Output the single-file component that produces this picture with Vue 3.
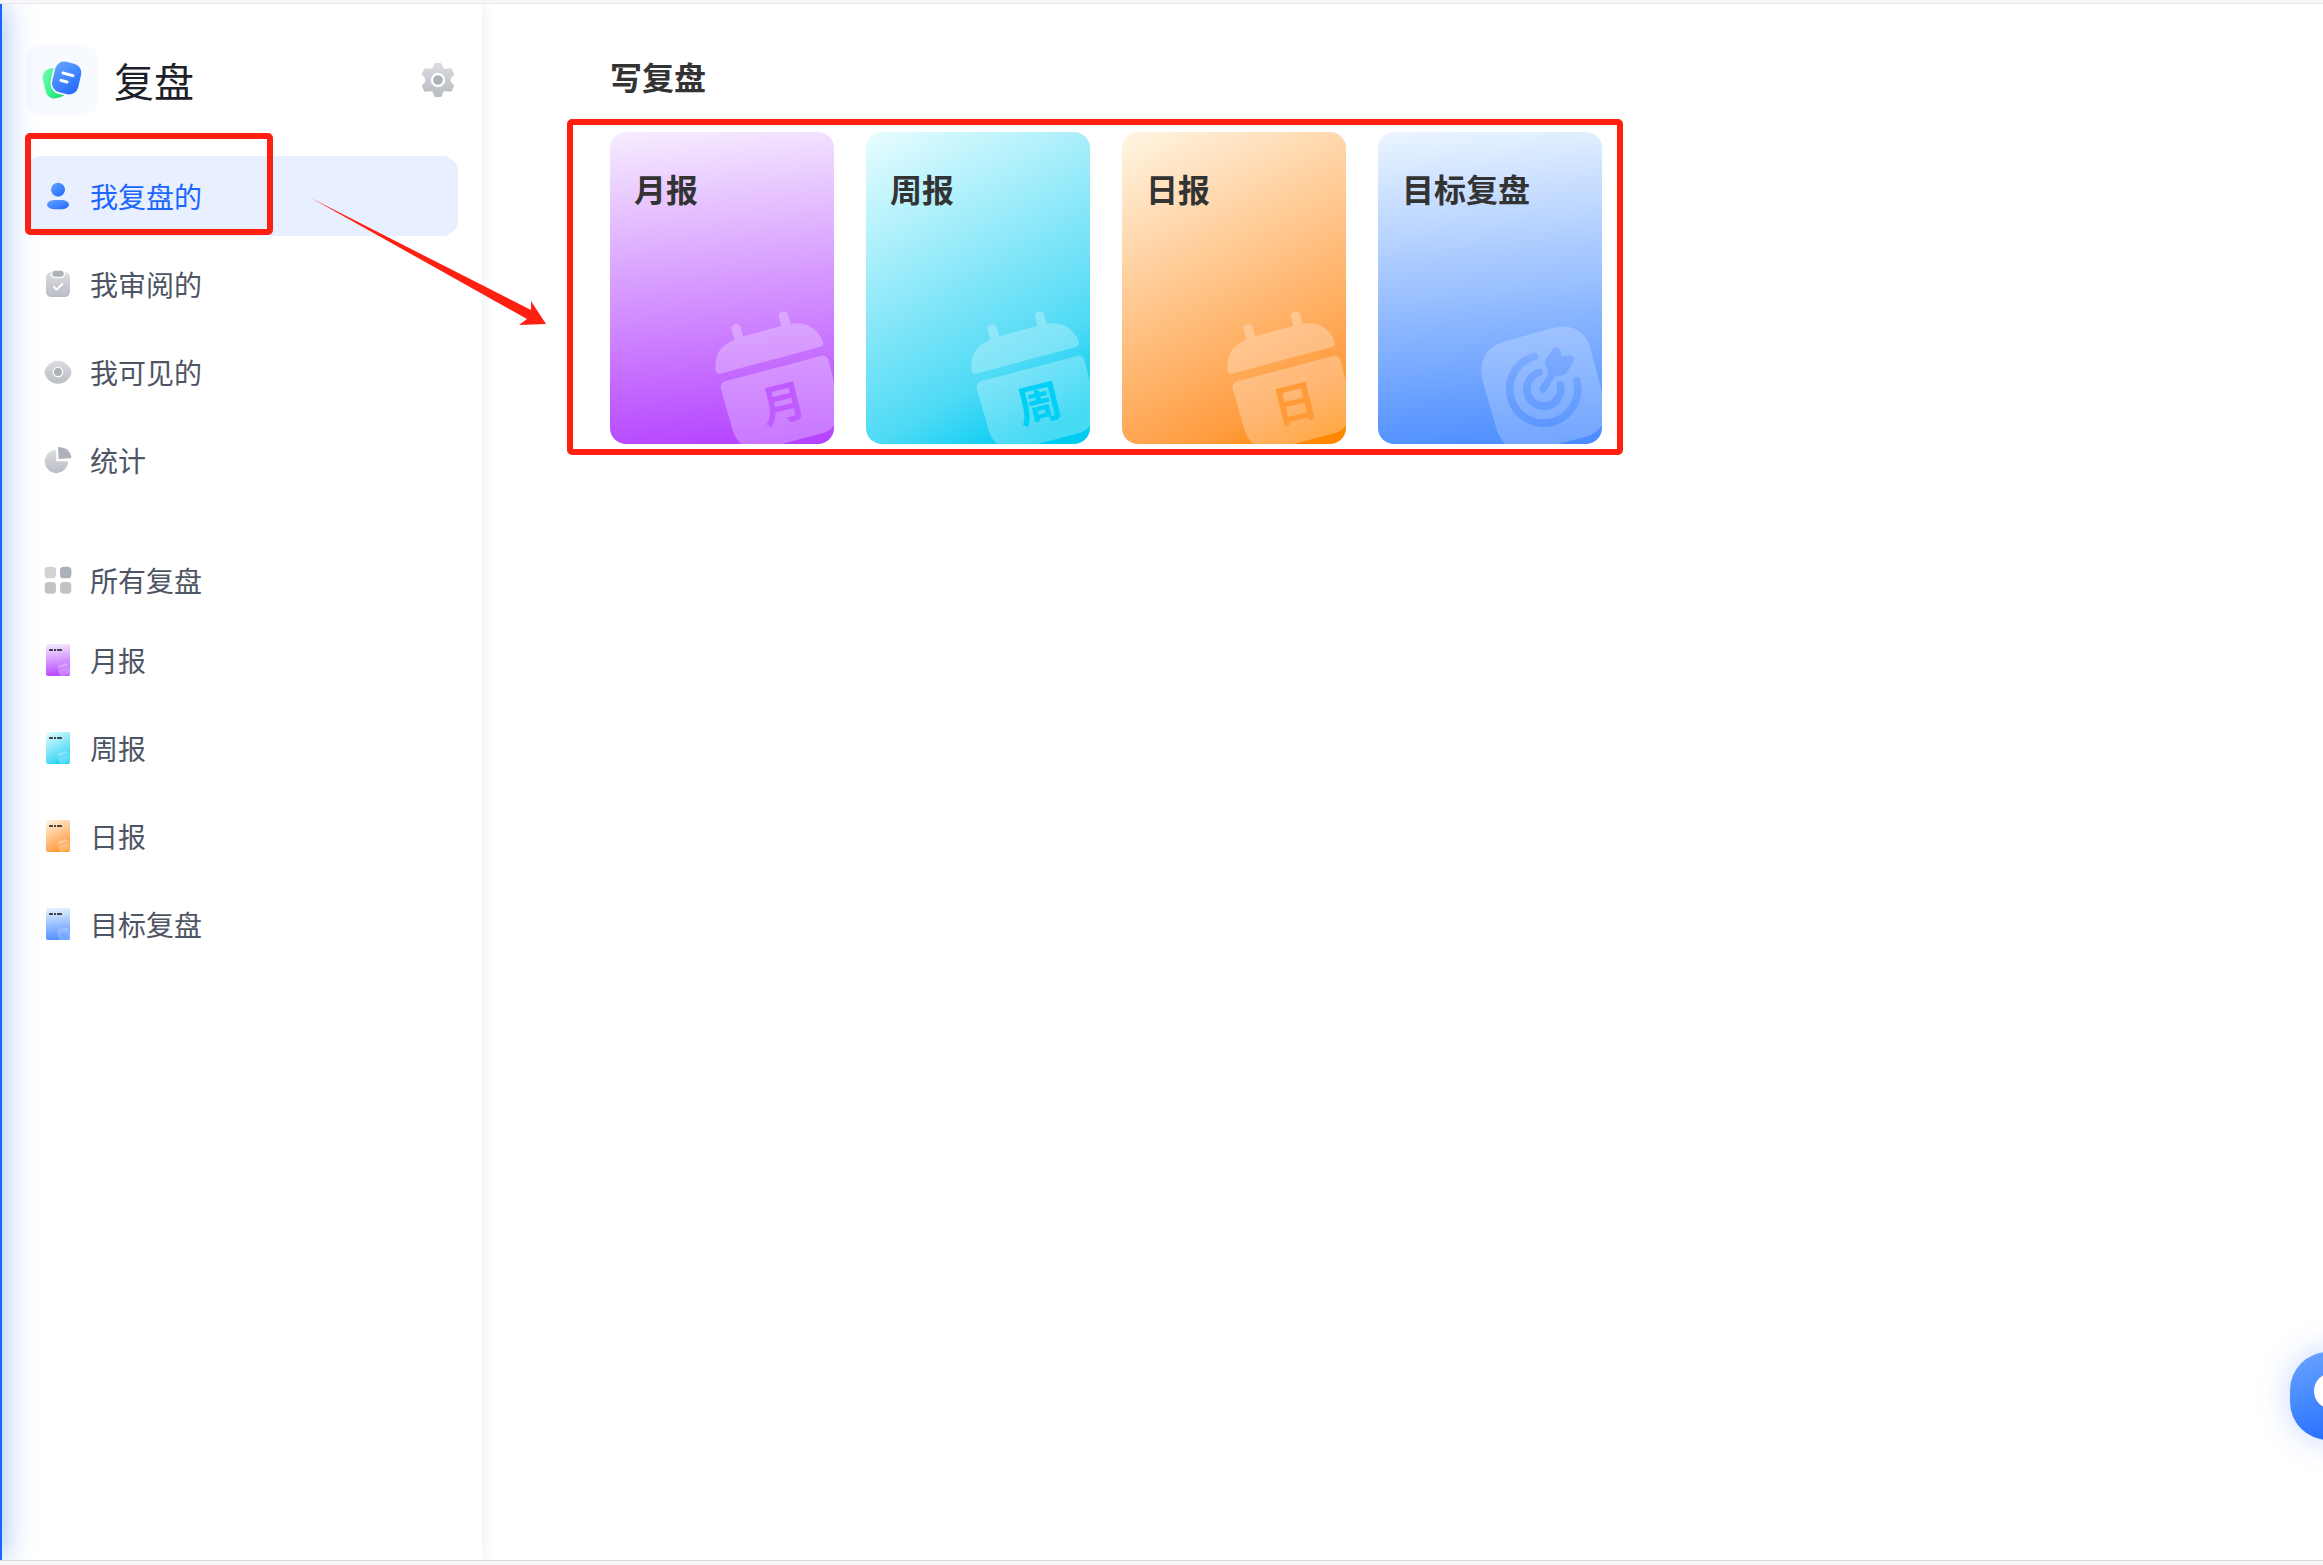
<script setup>
import { ref } from 'vue';

const menus = [
	{ key: 'mine', name: '我复盘的' },
	{ key: 'review', name: '我审阅的' },
	{ key: 'visible', name: '我可见的' },
	{ key: 'stat', name: '统计' }
];

const templates = [
	{ key: 'month', name: '月报', mark: '月' },
	{ key: 'week', name: '周报', mark: '周' },
	{ key: 'day', name: '日报', mark: '日' },
	{ key: 'target', name: '目标复盘', mark: '' }
];

const current = ref('mine');
</script>

<template>
	<div class="page">
		<!-- shared shapes -->
		<svg class="defs" aria-hidden="true">
			<defs>
				<linearGradient id="gray" x1="0" y1="0" x2="0" y2="1">
					<stop offset="0" stop-color="#dcdde1" />
					<stop offset="1" stop-color="#b9bcc3" />
				</linearGradient>
				<linearGradient id="gearFill" gradientUnits="userSpaceOnUse" x1="0" y1="0" x2="0" y2="102">
					<stop offset="0" stop-color="#dcdde1" />
					<stop offset="1" stop-color="#b7bac1" />
				</linearGradient>
				<linearGradient id="blue" x1="0" y1="0" x2="1" y2="1">
					<stop offset="0" stop-color="#69a6ff" />
					<stop offset="1" stop-color="#1b66ff" />
				</linearGradient>
				<linearGradient id="green" x1="0" y1="0" x2="1" y2="1">
					<stop offset="0" stop-color="#7dffb4" />
					<stop offset="0.5" stop-color="#33f28a" />
					<stop offset="1" stop-color="#22c877" />
				</linearGradient>
				<linearGradient id="ring" gradientUnits="userSpaceOnUse" x1="0" y1="110" x2="0" y2="350">
					<stop offset="0" stop-color="#80adff" />
					<stop offset="1" stop-color="#5c97ff" />
				</linearGradient>
				<symbol id="calendar" viewBox="0 0 402 432">
					<path
						d="M46 208C45 160 62 136 103 120L95 89C91 71 116 65 122 82L129 109L244 78L237 51C233 33 259 28 265 45L272 71C320 65 353 84 369 127Q371 137 362 140L60 221Q48 223 46 208Z"
					/>
					<path
						d="M75 244L363 168Q381 165 386 182L402 246V377Q392 391 370 399L245 432H124Q105 416 97 388L62 265Q60 249 75 244Z"
					/>
				</symbol>
				<symbol id="target" viewBox="0 0 402 432">
					<g transform="translate(-24 30)">
						<path
							fill="#fff"
							fill-opacity="0.22"
							d="M64 190C62 142 84 109 130 95L275 55C338 40 376 62 392 118L426 245V345Q410 371 375 381L295 402H135Q119 384 111 362L68 213Q65 201 64 190Z"
						/>
						<g fill="none" stroke="url(#ring)" stroke-width="23" stroke-linecap="round">
							<path d="M224 139A102 102 0 1 0 350 212" />
							<path d="M238 188A51 51 0 1 0 301 224" />
							<path d="M249 238L276 193" stroke-width="21" />
						</g>
						<path
							fill="url(#ring)"
							d="M255 153L279 116Q290 104 301 119L304 139L329 135Q347 136 342 152L323 185Q318 193 309 195L284 201L262 190L262 177L256 166Q253 158 255 153Z"
						/>
					</g>
				</symbol>
			</defs>
		</svg>

		<div class="layout">
			<aside class="sidebar">
				<header class="brand">
					<svg class="logo" viewBox="0 0 216 216" aria-hidden="true">
						<rect x="54" y="72" width="66" height="90" rx="25" fill="url(#green)" transform="rotate(-14 87 117)" />
						<rect
							x="82"
							y="55"
							width="80"
							height="94"
							rx="28"
							fill="url(#blue)"
							stroke="#f7faff"
							stroke-width="10"
							paint-order="stroke"
							transform="rotate(13 122 102)"
						/>
						<path d="M111 87L141 95M105 109L123 114" stroke="#fff" stroke-width="9" stroke-linecap="round" />
					</svg>
					<h1>复盘</h1>
					<button class="setting" type="button" aria-label="设置">
						<svg viewBox="0 0 102 102">
							<path
								fill="url(#gearFill)"
								stroke="url(#gearFill)"
								stroke-width="12"
								stroke-linejoin="round"
								d="M45 6H57L61 17Q67 25 76 23L88 22L93 33L85 42Q80 51 85 60L93 69L88 80L76 79Q67 77 61 85L57 96H45L41 85Q35 77 26 79L14 80L9 69L17 60Q22 51 17 42L9 33L14 22L26 23Q35 25 41 17Z"
							/>
							<circle cx="51" cy="51" r="18" fill="#adb1ba" stroke="#fff" stroke-width="7" />
						</svg>
					</button>
				</header>

				<nav>
					<ul class="menu">
						<li v-for="menu in menus" :key="menu.key">
							<button type="button" class="item" :class="{ on: current === menu.key }" @click="current = menu.key">
								<svg v-if="menu.key === 'mine'" viewBox="0 0 84 84">
									<circle cx="42" cy="23" r="21" fill="url(#blue)" />
									<rect x="9" y="54" width="66" height="28" rx="24" ry="14" fill="url(#blue)" />
								</svg>
								<svg v-else-if="menu.key === 'review'" viewBox="0 0 84 84">
									<rect x="6" y="6" width="72" height="75" rx="16" fill="url(#gray)" />
									<rect x="23" y="0" width="38" height="22" rx="10" fill="#adb1ba" stroke="#fff" stroke-width="4" />
									<path d="M30 51L38 59L55 42" fill="none" stroke="#fff" stroke-width="6" stroke-linecap="round" stroke-linejoin="round" />
								</svg>
								<svg v-else-if="menu.key === 'visible'" viewBox="0 0 84 84">
									<path d="M42 8C61 8 74 21 81 35Q84 42 81 50C74 64 61 77 42 77C23 77 10 64 3 50Q0 42 3 35C10 21 23 8 42 8Z" fill="url(#gray)" />
									<circle cx="42" cy="42" r="14" fill="#adb1ba" stroke="#fff" stroke-width="4" />
								</svg>
								<svg v-else viewBox="0 0 84 84">
									<path d="M31 12Q36 11 36 16L37 46L68 46Q73 46 72 51A35 35 0 1 1 31 12Z" fill="url(#gray)" />
									<path d="M42 3Q76 2 82 33Q82 37 78 37L44 39Z" fill="#adb1ba" />
								</svg>
								<span>{{ menu.name }}</span>
							</button>
						</li>
						<li class="mark mark_menu" aria-hidden="true"></li>
					</ul>

					<button type="button" class="item all">
						<svg viewBox="0 0 84 84">
							<rect x="2" y="2" width="34" height="35" rx="11" fill="#d3d3d3" />
							<rect x="48" y="2" width="34" height="35" rx="11" fill="#adb1ba" />
							<rect x="2" y="48" width="34" height="35" rx="11" fill="#c3c3c3" />
							<rect x="48" y="48" width="34" height="35" rx="11" fill="#c3c3c3" />
						</svg>
						<span>所有复盘</span>
					</button>
					<ul class="menu">
						<li v-for="item in templates" :key="item.key">
							<button type="button" class="item">
								<i class="thumb" :class="item.key">
									<svg viewBox="0 0 24 32">
										<path d="M3 6H7M8 6H10M11 6H16" stroke="#222" stroke-width="2" stroke-opacity="0.8" />
										<use
											:href="item.mark ? '#calendar' : '#target'"
											x="10"
											y="17"
											width="14"
											height="15"
											fill="#fff"
											fill-opacity="0.28"
										/>
									</svg>
								</i>
								<span>{{ item.name }}</span>
							</button>
						</li>
					</ul>
				</nav>
			</aside>

			<main>
				<h2>写复盘</h2>
				<div class="cards">
					<button v-for="item in templates" :key="item.key" type="button" class="card" :class="item.key">
						<span class="card_name">{{ item.name }}</span>
						<svg class="art" viewBox="0 0 402 432" aria-hidden="true">
							<template v-if="item.mark">
								<use href="#calendar" width="402" height="432" fill="#fff" fill-opacity="0.28" />
								<text x="247" y="302" transform="rotate(-14 247 302)">{{ item.mark }}</text>
							</template>
							<use v-else href="#target" width="402" height="432" />
						</svg>
					</button>
					<div class="mark mark_cards" aria-hidden="true"></div>
				</div>
			</main>

			<svg class="arrow" viewBox="0 0 236 128" aria-hidden="true">
				<path d="M0 0L220 112V103L235 126L208 127L216 121Z" fill="#ff2012" />
			</svg>

			<button class="float" type="button" aria-label="客服">
				<svg viewBox="0 0 88 88">
					<circle cx="42" cy="39" r="18" fill="#fff" />
				</svg>
			</button>
		</div>
	</div>
</template>

<style>
body {
	margin: 0;
}
</style>

<style scoped>
.page {
	display: flex;
	flex-direction: column;
	box-sizing: border-box;
	min-height: 100vh;
	padding: 3px 0 4px;
	background: #f6f6f6;
	font-family: 'Noto Sans CJK SC', sans-serif;
}
.defs {
	position: absolute;
	width: 0;
	height: 0;
}
button {
	margin: 0;
	padding: 0;
	border: 0 none;
	background: none;
	font-family: inherit;
	text-align: left;
	cursor: pointer;
}
ul {
	margin: 0;
	padding: 0;
	list-style: none;
}
.layout {
	display: flex;
	position: relative;
	flex: 1;
	overflow: hidden;
	border-top: 1px solid #e8e8e8;
	border-bottom: 1px solid #d8d8d8;
	background: #fff;
}
.layout::before {
	content: '';
	position: absolute;
	top: 0;
	bottom: 0;
	left: -40px;
	z-index: 1;
	width: 42px;
	background: #1b66ff;
	box-shadow: 0 0 32px rgba(27, 102, 255, 0.46);
	pointer-events: none;
}
.sidebar {
	flex: none;
	box-sizing: border-box;
	width: 482px;
	padding: 40px 24px 40px 26px;
	box-shadow: 0 0 16px rgba(0, 0, 0, 0.08);
}
.brand {
	display: flex;
	align-items: center;
	margin-bottom: 40px;
}
.logo {
	width: 72px;
	height: 72px;
	background: #f7faff;
	border-radius: 16px;
}
.brand h1 {
	flex: 1;
	margin: 0 0 0 16px;
	color: #1d2129;
	font-size: 40px;
	font-weight: 400;
	line-height: 72px;
}
.setting {
	margin-right: 3px;
}
.setting svg {
	display: block;
	width: 34px;
	height: 34px;
}
.menu {
	display: flex;
	position: relative;
	flex-direction: column;
	gap: 8px;
}
.item {
	display: flex;
	align-items: center;
	gap: 18px;
	box-sizing: border-box;
	width: 100%;
	height: 80px;
	padding: 0 18px;
	border-radius: 16px;
	color: #4e5565;
	font-size: 28px;
	line-height: 40px;
}
.item.on {
	background: #e8efff;
	color: #1b66ff;
}
.item > svg {
	width: 28px;
	height: 28px;
}
.item.all {
	margin-top: 40px;
}
.thumb {
	width: 24px;
	height: 32px;
	margin: 0 2px;
	border-radius: 2px;
}
.thumb svg {
	display: block;
	width: 24px;
	height: 32px;
}
main {
	flex: 1;
	padding: 48px 40px 40px 128px;
}
main h2 {
	margin: 0 0 32px;
	color: #333;
	font-size: 32px;
	font-weight: 700;
	line-height: 48px;
}
.cards {
	display: flex;
	position: relative;
	gap: 32px;
	width: fit-content;
}
.card {
	display: flex;
	position: relative;
	align-items: flex-start;
	overflow: hidden;
	box-sizing: border-box;
	width: 224px;
	height: 312px;
	padding: 32px 24px;
	border-radius: 16px;
}
.card_name {
	color: #333;
	font-size: 32px;
	font-weight: 700;
	line-height: 48px;
}
.art {
	position: absolute;
	right: 0;
	bottom: 0;
	width: 134px;
	height: 144px;
}
.art text {
	font-size: 132px;
	font-weight: 700;
	text-anchor: middle;
	dominant-baseline: central;
}
.month {
	background: linear-gradient(174deg, #f6edff, #b440ff);
}
.week {
	background: linear-gradient(150deg, #e8fdff, #4edaf5 72%, #00ccf2 92%);
}
.day {
	background: linear-gradient(152deg, #fff6e4, #ff9c40 82%, #ff8800 96%);
}
.target {
	background: linear-gradient(174deg, #ebf5ff, #4a8cff);
}
.month text {
	fill: #c05cff;
}
.week text {
	fill: #00d0f5;
}
.day text {
	fill: #ff9a36;
}
/* red frames */
.mark {
	position: absolute;
	border: 6px solid #ff2012;
	border-radius: 5px;
	pointer-events: none;
}
.mark_menu {
	top: -23px;
	left: -1px;
	width: 236px;
	height: 90px;
}
.mark_cards {
	top: -13px;
	right: -21px;
	bottom: -11px;
	left: -43px;
}
.arrow {
	position: absolute;
	top: 194px;
	left: 311px;
	width: 236px;
	height: 128px;
	pointer-events: none;
}
.float {
	position: absolute;
	right: -55px;
	bottom: 120px;
	width: 88px;
	height: 88px;
	border-radius: 38px;
	background: linear-gradient(160deg, #6ba6ff, #1b66ff);
	box-shadow: 0 0 32px rgba(27, 102, 255, 0.25);
}
.float svg {
	display: block;
	width: 88px;
	height: 88px;
}
</style>
